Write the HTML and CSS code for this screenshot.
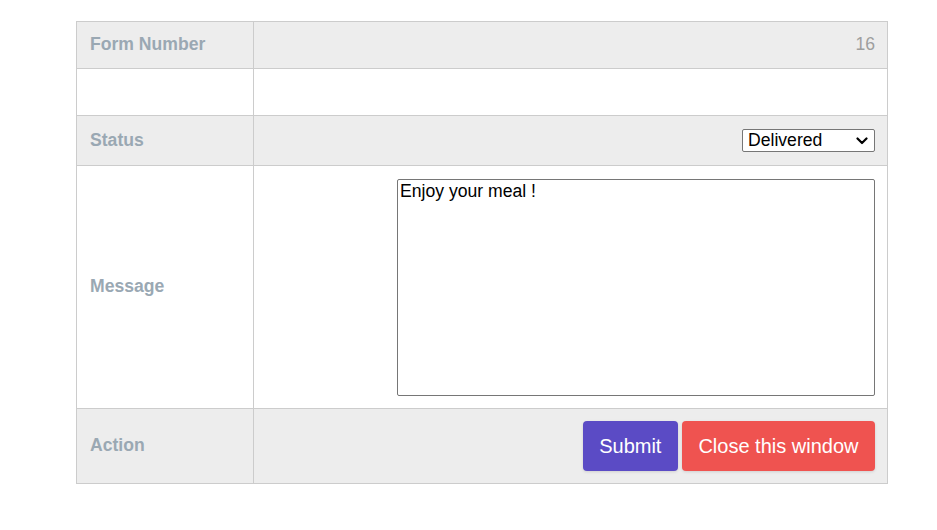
FILE: index.html
```html
<!DOCTYPE html>
<html lang="en">
<head>
<meta charset="utf-8">
<title>Order form</title>
<link rel="stylesheet" href="styles.css">
</head>
<body>
<main class="page">
  <table class="form-table">
    <tbody>
      <tr class="row row-gray row-std">
        <th class="label">Form Number</th>
        <td class="value num">16</td>
      </tr>
      <tr class="row row-std">
        <th class="label"></th>
        <td class="value"></td>
      </tr>
      <tr class="row row-gray row-status">
        <th class="label">Status</th>
        <td class="value right">
          <select class="status-select">
            <option>Pending</option>
            <option>Preparing</option>
            <option selected>Delivered</option>
            <option>Cancelled</option>
          </select>
        </td>
      </tr>
      <tr class="row row-msg">
        <th class="label">Message</th>
        <td class="value right">
          <textarea class="msg" spellcheck="false">Enjoy your meal !</textarea>
        </td>
      </tr>
      <tr class="row row-gray row-action">
        <th class="label">Action</th>
        <td class="value right">
          <div class="actions">
            <button class="btn btn-submit" type="button">Submit</button>
            <button class="btn btn-close" type="button">Close this window</button>
          </div>
        </td>
      </tr>
    </tbody>
  </table>
</main>
</body>
</html>
```
FILE: styles.css
```css
html, body {
  margin: 0;
  padding: 0;
  background: #ffffff;
}
body {
  font-family: "Liberation Sans", Arial, sans-serif;
  font-size: 17.6px;
}
.page {
  padding: 21px 0 0 76px;
}
.form-table {
  border-collapse: collapse;
  width: 812px;
  border: 1px solid #cccccc;
  table-layout: fixed;
}
.form-table th,
.form-table td {
  border: 1px solid #cccccc;
  padding: 0 12px 0 13px;
  vertical-align: middle;
}
.form-table th.label,
.form-table td.num {
  padding-bottom: 2px;
}
.label {
  width: 151px;
  text-align: left;
  font-weight: bold;
  color: #9aa8b3;
  font-size: 17.6px;
  line-height: 20px;
}
.row-gray {
  background: #ededed;
}
.row-std { height: 47px; }
.row-status { height: 50px; }
.row-msg { height: 243px; }
.row-action { height: 75px; }
.value {
  color: #333;
}
.num {
  text-align: right;
  color: #9e9e9e;
  font-size: 17.6px;
}
.right {
  text-align: right;
}
.status-select {
  -webkit-appearance: none;
  appearance: none;
  width: 133px;
  height: 23px;
  font-family: "Liberation Sans", Arial, sans-serif;
  font-size: 17.6px;
  line-height: 21px;
  color: #000;
  background-color: #fff;
  background-image: url("data:image/svg+xml,%3Csvg xmlns='http://www.w3.org/2000/svg' width='12' height='8' viewBox='0 0 12 8'%3E%3Cpath d='M1.5 1.5 L6 6 L10.5 1.5' fill='none' stroke='%23000' stroke-width='2.2' stroke-linecap='round' stroke-linejoin='round'/%3E%3C/svg%3E");
  background-repeat: no-repeat;
  background-position: right 6px center;
  background-size: 12px 8px;
  border: 1px solid #767676;
  border-radius: 2px;
  padding: 0 22px 0 5px;
  vertical-align: middle;
  display: inline-block;
  text-align: left;
}
.msg {
  display: inline-block;
  width: 478px;
  height: 217px;
  box-sizing: border-box;
  border: 1px solid #767676;
  border-radius: 2px;
  padding: 1px 2px;
  font-family: "Liberation Sans", Arial, sans-serif;
  font-size: 17.6px;
  color: #000;
  resize: none;
  vertical-align: middle;
  text-align: left;
  margin: 0;
}
.actions {
  display: flex;
  justify-content: flex-end;
  gap: 4px;
}
.btn {
  height: 50px;
  padding: 0 16.5px;
  border: 0;
  border-radius: 4px;
  font-family: "Liberation Sans", Arial, sans-serif;
  font-size: 20px;
  color: #ffffff;
  cursor: pointer;
  box-shadow: 0 1px 3px rgba(0, 0, 0, 0.12);
}
.btn-submit {
  background: #5b4bc5;
}
.btn-close {
  background: #ef5350;
}
```
